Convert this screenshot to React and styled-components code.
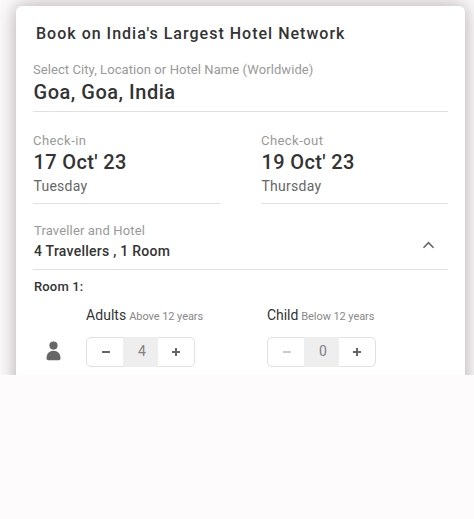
import styled, { createGlobalStyle } from 'styled-components';

const GlobalStyle = createGlobalStyle`
  * {
    box-sizing: border-box;
  }

  body {
    margin: 0;
    background: #fdfbfc;
    font-family: Roboto, 'Liberation Sans', sans-serif;
    color: #333;
  }
`;

const Page = styled.main`
  height: 375px;
  padding: 6px 9px 0 16px;
  overflow: hidden;
`;

const Card = styled.section`
  height: 420px;
  padding: 18px 17px 0;
  background: #fff;
  border-radius: 6px;
  box-shadow: 0 0 20px rgba(60, 45, 50, 0.4);
`;

const Title = styled.h1`
  margin: 0 0 18px 3px;
  font-size: 16px;
  font-weight: 500;
  line-height: 20px;
  letter-spacing: 1.01px;
  white-space: nowrap;
`;

const Field = styled.div`
  padding-bottom: ${({ $bottom }) => $bottom}px;
  border-bottom: 1px solid #e0e0e0;
`;

const Label = styled.div`
  font-size: 13px;
  line-height: 16px;
  letter-spacing: ${({ $spacing }) => $spacing || 0.15}px;
  color: #999;
`;

const Value = styled.div`
  padding-left: 0.5px;
  font-size: 20px;
  font-weight: 500;
  line-height: ${({ $height }) => $height || 26}px;
  letter-spacing: ${({ $spacing }) => $spacing || 0.35}px;
`;

const Day = styled.div`
  padding: 1px 0 0 0.5px;
  font-size: 14px;
  line-height: 20px;
  letter-spacing: 0.25px;
  color: #666;
`;

const Dates = styled.div`
  display: grid;
  grid-template-columns: 187px 187px;
  justify-content: space-between;
  margin: 21px 0 19px;
`;

const Travellers = styled(Field)`
  display: flex;
  align-items: center;
  justify-content: space-between;
  padding-left: 1px;
  padding-right: 13px;
`;

const Chevron = styled.svg`
  margin-top: 5px;
`;

const Summary = styled.div`
  margin-top: 2px;
  font-size: 14px;
  font-weight: 500;
  line-height: 20px;
  letter-spacing: 0.25px;
`;

const RoomTitle = styled.h2`
  margin: 7px 0 8px 1px;
  font-size: 13px;
  font-weight: 500;
  line-height: 20px;
  letter-spacing: 0.15px;
`;

const Guests = styled.div`
  display: grid;
  grid-template-columns: 53px 181px 1fr;
`;

const Person = styled.svg`
  align-self: end;
  margin: 0 0 6px 13px;
`;

const GuestType = styled.div`
  height: 20px;
  margin-bottom: 12px;
  font-size: 14px;
  line-height: 20px;
  letter-spacing: ${({ $spacing }) => $spacing}px;
  white-space: nowrap;
`;

const Age = styled.span`
  margin-left: 3px;
  font-size: 11px;
  letter-spacing: -0.07px;
  color: #888;
`;

const Counter = styled.div`
  display: grid;
  grid-template-columns: 36px 35px 36px;
  width: 109px;
  height: 30px;
  border: 1px solid #e0e0e0;
  border-radius: 5px;
`;

const CounterButton = styled.button`
  display: flex;
  align-items: center;
  justify-content: center;
  padding: 0 0 0 ${({ $shift }) => $shift || 0}px;
  border: 0;
  background: none;
  color: #666;

  &:disabled {
    color: #ccc;
  }
`;

const Count = styled.output`
  margin: -1px 0;
  padding-left: 3px;
  background: #eee;
  font-size: 14px;
  line-height: 29px;
  text-align: center;
  color: #808080;
`;

function Stepper({ value }) {
  return (
    <Counter>
      <CounterButton $shift={2} disabled={value === 0} aria-label="Remove">
        <svg width="8" height="8" viewBox="0 0 8 8">
          <path d="M0 3h8v2H0z" fill="currentColor" />
        </svg>
      </CounterButton>
      <Count>{value}</Count>
      <CounterButton aria-label="Add">
        <svg width="8" height="8" viewBox="0 0 8 8">
          <path d="M0 3h3V0h2v3h3v2H5v3H3V5H0z" fill="currentColor" />
        </svg>
      </CounterButton>
    </Counter>
  );
}

function DateField({ label, date, day }) {
  return (
    <Field $bottom={7}>
      <Label $spacing={0.45}>{label}</Label>
      <Value>{date}</Value>
      <Day>{day}</Day>
    </Field>
  );
}

export default function App() {
  return (
    <>
      <GlobalStyle />
      <Page>
        <Card>
          <Title>Book on India's Largest Hotel Network</Title>
          <Field $bottom={5}>
            <Label $spacing={0.08}>
              Select City, Location or Hotel Name (Worldwide)
            </Label>
            <Value $height={28} $spacing={0.52}>
              Goa, Goa, India
            </Value>
          </Field>
          <Dates>
            <DateField label="Check-in" date="17 Oct' 23" day="Tuesday" />
            <DateField label="Check-out" date="19 Oct' 23" day="Thursday" />
          </Dates>
          <Travellers $bottom={8}>
            <div>
              <Label>Traveller and Hotel</Label>
              <Summary>4 Travellers , 1 Room</Summary>
            </div>
            <Chevron width="13" height="8" viewBox="0 0 13 8">
              <path
                d="M1.5 6.7l5-5 5 5"
                fill="none"
                stroke="#666"
                strokeWidth="1.6"
              />
            </Chevron>
          </Travellers>
          <RoomTitle>Room 1:</RoomTitle>
          <Guests>
            <Person width="15" height="20" viewBox="0 0 15 20" fill="#666">
              <circle cx="7.5" cy="4.6" r="4.1" />
              <path d="M.5 17.3c0-4.8 2.8-7.6 7-7.6s7 2.8 7 7.6c0 1.3-.6 2-1.8 2H2.3c-1.2 0-1.8-.7-1.8-2z" />
            </Person>
            <div>
              <GuestType $spacing={0.05}>
                Adults<Age>Above 12 years</Age>
              </GuestType>
              <Stepper value={4} />
            </div>
            <div>
              <GuestType $spacing={-0.05}>
                Child<Age>Below 12 years</Age>
              </GuestType>
              <Stepper value={0} />
            </div>
          </Guests>
        </Card>
      </Page>
    </>
  );
}
